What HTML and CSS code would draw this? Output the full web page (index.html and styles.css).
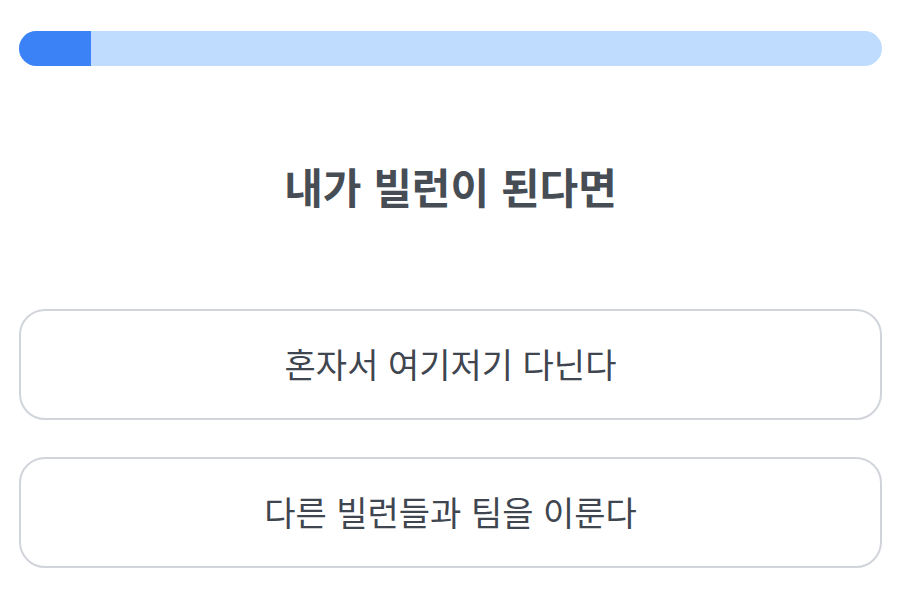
FILE: index.html
```html
<!DOCTYPE html>
<html lang="ko">
<head>
<meta charset="utf-8">
<link rel="stylesheet" href="styles.css">
</head>
<body>
<main class="page">
  <div class="progress"><div class="progress-fill" style="width: 8.33%"></div></div>
  <h1 class="question">내가 빌런이 된다면</h1>
  <div class="options">
    <button class="option">혼자서 여기저기 다닌다</button>
    <button class="option">다른 빌런들과 팀을 이룬다</button>
  </div>
</main>
</body>
</html>
```
FILE: styles.css
```css
html, body {
  margin: 0;
  background: #ffffff;
}
body {
  font-family: "Noto Sans CJK KR", "Noto Sans", sans-serif;
  color: #464c54;
}
.page {
  padding: 31px 25px 0 19px;
}
.progress {
  height: 35px;
  border-radius: 18px;
  background: #bfdbfe;
  overflow: hidden;
}
.progress-fill {
  height: 100%;
  background: #3b82f6;
}
.question {
  margin: 94px 0 98px;
  font-size: 42px;
  line-height: 51px;
  font-weight: 700;
  text-align: center;
  color: #474d55;
}
.options {
  display: flex;
  flex-direction: column;
  gap: 37px;
}
.option {
  height: 111px;
  padding: 0 0 2px;
  border: 2px solid #d1d5db;
  border-radius: 26px;
  background: #ffffff;
  font-family: inherit;
  font-size: 34px;
  color: #40464f;
  cursor: pointer;
}
```
